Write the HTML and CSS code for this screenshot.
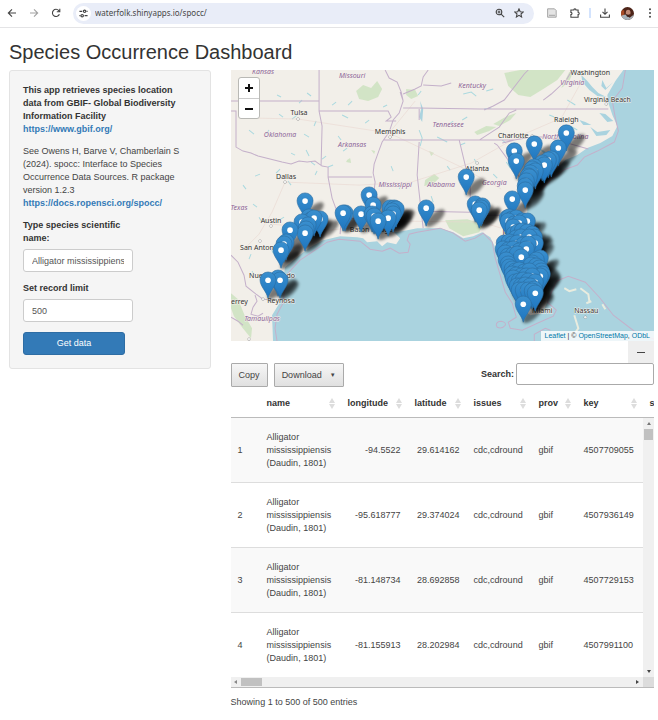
FILE: index.html
```html
<!DOCTYPE html>
<html lang="en">
<head>
<meta charset="utf-8">
<title>Species Occurrence Dashboard</title>
<link rel="stylesheet" href="styles.css">
</head>
<body>
<header class="browser">
  <button class="tool" aria-label="Back"><svg viewBox="0 0 10 10"><path d="M9 5H1.5M5 1.3L1.3 5L5 8.7"/></svg></button>
  <button class="tool tool-off" aria-label="Forward"><svg viewBox="0 0 10 10"><path d="M1 5H8.5M5 1.3L8.7 5L5 8.7"/></svg></button>
  <button class="tool" aria-label="Reload"><svg viewBox="0 0 10 10"><path d="M8.4 6.2A3.6 3.6 0 1 1 7.8 2.6L8.6 3.5M8.8 .8V3.8H5.8"/></svg></button>
  <div class="address">
    <button class="site" aria-label="Site information"><svg viewBox="0 0 10 10"><path d="M1.3 3H3.8M6 7H8.7M1.3 7H2.2M7.8 3H8.7"/><circle cx="6" cy="3" r="1.1"/><circle cx="3.8" cy="7" r="1.1"/></svg></button>
    <input class="url" aria-label="Address" value="waterfolk.shinyapps.io/spocc/">
    <button class="tool" aria-label="Zoom"><svg viewBox="0 0 10 10"><circle cx="4" cy="4" r="2.8"/><path d="M6.1 6.1L9.2 9.2M2.6 4H5.4M4 2.6V5.4"/></svg></button>
    <button class="tool" aria-label="Bookmark"><svg viewBox="0 0 10 10"><path d="M5 .9L6.2 3.7L9.3 4L7 6L7.6 9L5 7.4L2.4 9L3 6L.7 4L3.8 3.7Z"/></svg></button>
  </div>
  <button class="tool tool-wide" aria-label="Reader"><svg viewBox="0 0 10 10"><path class="page-icon" d="M.6 .8H7.5L9.2 2.5V9.2H.6Z"/><path class="page-icon" d="M2 7.3H8"/></svg></button>
  <button class="tool" aria-label="Extensions"><svg viewBox="0 0 10 10"><path d="M.9 2H3.8A1.1 1.1 0 0 1 6 2H8.1V4.3A1.1 1.1 0 0 1 8.1 6.5V9.2H.9V6.6A1.1 1.1 0 0 0 .9 4.4Z"/></svg></button>
  <span class="divider"></span>
  <button class="tool" aria-label="Downloads"><svg viewBox="0 0 10 10"><path d="M5 .4V6M2.5 3.8L5 6.3L7.5 3.8M.6 6.6V9.2H9.4V6.6"/></svg></button>
  <button class="avatar" aria-label="Profile"><svg viewBox="0 0 12 12"><defs><clipPath id="face"><circle cx="6" cy="6" r="6"/></clipPath></defs><g clip-path="url(#face)"><path fill="#4d2418" d="M0 0H12V12H0Z"/><path fill="#a94a24" d="M0 3H3V9H0Z"/><path fill="#a7b2ba" d="M0 8L4 7L8 10L12 7V12H0Z"/><ellipse cx="6.6" cy="5.3" rx="2.2" ry="2.8" fill="#c08a76"/><path fill="#3d2019" d="M4.5 6.3Q6.6 8 8.8 6.3L7.5 9H5.5Z"/></g></svg></button>
  <button class="tool" aria-label="Menu"><svg viewBox="0 0 10 10"><g class="dots"><circle cx="5" cy="1.2" r="1"/><circle cx="5" cy="5" r="1"/><circle cx="5" cy="8.8" r="1"/></g></svg></button>
</header>

<main class="page">
  <h1>Species Occurrence Dashboard</h1>
  <div class="columns">
    <form class="well">
      <p class="strong">This app retrieves species location data from GBIF- Global Biodiversity Information Facility<br><a href="https://www.gbif.org/">https://www.gbif.org/</a></p>
      <p>See Owens H, Barve V, Chamberlain S (2024). spocc: Interface to Species Occurrence Data Sources. R package version 1.2.3<br><a href="https://docs.ropensci.org/spocc/">https://docs.ropensci.org/spocc/</a></p>
      <div class="field">
        <label for="species">Type species scientific name:</label>
        <input id="species" type="text" value="Alligator mississippiensis">
      </div>
      <div class="field">
        <label for="limit">Set record limit</label>
        <input id="limit" type="text" value="500">
      </div>
      <button class="primary" type="button">Get data</button>
    </form>

    <section class="results">
      <div class="map">
        <svg class="map-canvas" viewBox="0 0 423 271" role="img" aria-label="Occurrence map">
          <defs>
            <linearGradient id="pinfill" x1="0" y1="0" x2="0" y2="1"><stop offset="0" stop-color="#3a8fce"/><stop offset="1" stop-color="#1d75bf"/></linearGradient>
            <filter id="soft" x="-50%" y="-100%" width="200%" height="300%"><feGaussianBlur stdDeviation="1.8"/></filter>
            <g id="pin"><path d="M0 18C-1.500 11-8 6.500-8-.5A8 7.700 0 0 1 8-.5C8 6.500 1.500 11 0 18Z" fill="url(#pinfill)" stroke="#2a6c9f" stroke-width=".6"/><circle r="2.800" fill="#fff"/></g>
            <ellipse id="shadow" cx="9" cy="10" rx="12" ry="5" transform="rotate(-42 9 10)" filter="url(#soft)"/>
          </defs>
          <path class="water" d="M0 0H423V271H0Z"/>
          <path class="land" d="M0 0H392L384 11L376 25L377 33L381 45L386 56L381 66L369 73L356 78L346 85L334 90L324 101L309 113L296 131L296 142L299 155L306 168L312 188L317 212L316 232L311 243L299 245L291 238L284 232L279 215L272 202L269 188L264 177L259 167L251 162L242 166L232 168L222 162L209 158L186 158L171 161L163 162L169 168L165 174L156 172L151 176L146 171L136 172L132 168L126 167L109 166L92 170L79 177L66 187L54 197L51 215L49 232L41 245L42 271H0Z"/>
          <g class="wood">
            <path d="M125 21L132 15L140 18L146 11L151 19L147 27L137 31L128 29ZM273 3L289 0H334L326 10L312 19L299 27L287 25L277 16ZM243 62L255 56L265 57L258 61L246 65ZM194 110L203 104L208 108L202 114L193 116ZM116 90L119 88L120 93L115 92ZM198 81L203 83L200 86ZM140 80L144 81L143 84ZM214 150L236 149L252 154L248 162L232 166L218 158ZM0 223L7 229L14 246L21 258L20 268L11 257L3 246L0 238ZM330 18L333 12L338 2H342L337 13ZM175 19L184 20L187 26L180 29L175 25ZM262 54L276 46L285 43L279 50L268 56Z"/>
          </g>
          <g class="lake">
            <path d="M189 31L192 39L191 52L188 47L190 39ZM350 5L356 11L361 17L367 23L375 27L366 26L358 20L351 12ZM359 57L366 62L379 60L375 65L365 66ZM368 43L374 44L382 51L376 52ZM348 50L354 52L360 55L352 55ZM371 10L375 18L382 12L374 20L370 16ZM306 77L313 81L318 87L311 82Z"/>
            <path class="brook" d="M18 60l5 4M38 60l-3 4M48 44l4 3M61 49l5-4M73 64l5 3M85 51l-2 5M75 80l3 6M80 92l4 3M60 83l4 2M49 99l-4 4M24 106l5-2M12 115l3 4M22 134l4 3M57 111l3 4M86 101l-2 4M46 25l4 2M68 33l3-3M76 23l4 3M101 35l4-3M111 45l6 3M121 31l-4 4M156 35l-4 2M134 53l4-3M107 66l3 4M116 78l-4 3M91 89l4-3M97 97l5-2M188 60l3 8l-2 8M206 67l10 5M187 25l3-4M232 24l8-2l5 4M255 21l7-2M218 54l4-3M229 75l5-2M271 70l4 3M275 92l4 6M216 96l3 4M243 89l3 5M262 104l4 4M231 50l5-3M253 39l7-1M336 30l8 5M346 60l-7-4M337 68l-6 3M318 45l5 2M160 96l2 5M171 114l-3 5M200 126l2 6M28 147l3 5M40 178l2 5M48 150l5-3M21 201l3 4M20 184l-2 5"/>
          </g>
          <g class="road"><path d="M14 178L28 164L41 142L54 112M22 48L67 49M67 49L158 63L184 31M158 63L228 96M54 112L128 115L180 112L240 93L286 67L330 48L350 12M228 96L270 119M41 154L100 160L170 151L250 152L270 158"/></g>
          <path class="border" d="M0 31H88V0M88 31V41H157L160 47L155 51H165M0 41H5V77L12 81L20 83L27 86L35 88L43 90L51 92L60 94L68 91L76 92L84 91L91 96L97 97V107L101 128L105 139L110 148L109 164M88 41L91 56L90 95M97 107H141M154 0L158 8L166 12L170 22L172 31L168 43L162 50L158 62L151 72L148 80L143 94L142 103L144 112L143 120L147 129M172 31L169 22M172 38H187L248 39H377M188 39V50M153 70H283L301 67H315L357 79M188 72L186 105L190 141L192 158M228 70L239 116L239 142L256 145H280L297 145M263 73L266 75L277 90L287 105L296 125M283 70L271 73M190 141L239 142M248 70L268 57L278 43L285 40M297 0L293 4L273 30L262 36L253 40M312 30L320 24L335 10L341 0M172 24L184 19L190 16L192 7L197 0M192 15L210 16L220 13M109 148H137"/>
          <g class="border">
            <path d="M0 185L7 192L13 205L15 216L25 224L32 229L44 230M24 225L26 231L22 237L20 244L27 246L32 243M0 247L7 251L12 255"/>
            <path d="M46 271L44 258L46 244L52 233L54 217L57 203L69 190L84 180L96 172L108 169L129 171L139 179L151 181L159 178L168 183L177 182L179 174L176 170L178 164L186 162L209 158L222 163L234 171L244 168L252 163L261 172L264 188L269 205L274 222L281 233L285 247L277 252L279 258L291 260L306 253L322 246L325 240L316 232L321 220L325 211L337 206L354 212L368 227L382 245L403 261L423 269"/>
            <path d="M394 0L391 18L381 31L384 48L387 61L383 72L366 81L353 87L346 95L332 100L320 109L306 124"/>
            <path d="M265 255Q265 251 270 251Q275 252 274 255Q271 259 266 257ZM303 271V264L314 258L319 260"/>
          </g>
          <path class="land isle" d="M333 218L338 221L345 219M349 218L357 224L358 231M343 245L347 258L342 265M360 231L355 233M371 234L374 239"/>
          <g class="state">
            <text x="32" y="4">Kansas</text><text x="121" y="8">Missouri</text><text x="49" y="67">Oklahoma</text><text x="121" y="77">Arkansas</text><text x="164" y="117">Mississippi</text><text x="210" y="117">Alabama</text><text x="217" y="57">Tennessee</text><text x="241" y="18">Kentucky</text><text x="341" y="15">Virginia</text><text x="334" y="69">North Carolina</text><text x="263" y="115">Georgia</text><text x="8" y="140">Texas</text><text x="31" y="251">Tamaulipas</text>
          </g>
          <g class="city">
            <text x="68" y="45">Tulsa</text><text x="159" y="64">Memphis</text><text x="55" y="109">Dallas</text><text x="40" y="153">Austin</text><text x="29" y="180">San Antonio</text><text x="41" y="208">Nuevo Laredo</text><text x="50" y="233">Reynosa</text><text x="5" y="234">nterrey</text><text x="140" y="162">Baton Rouge</text><text x="246" y="101">Atlanta</text><text x="282" y="68">Charlotte</text><text x="335" y="52">Raleigh</text><text x="376" y="32">Virginia Beach</text><text x="359" y="5">Washington</text><text x="311" y="243">Miami</text><text x="355" y="243">Nassau</text><text x="290" y="164">Jacksonville</text>
            <circle cx="67" cy="49" r="1.300"/><circle cx="54" cy="112" r="1.300"/><circle cx="40" cy="156" r="1.300"/><circle cx="29" cy="171" r="1.300"/><circle cx="32" cy="229" r="1.300"/><circle cx="246" cy="93" r="1.300"/><circle cx="301" cy="66" r="1.300"/><circle cx="375" cy="34" r="1.300"/><circle cx="354" cy="247" r="1.300"/><circle cx="159" cy="67" r="1.300"/><circle cx="18" cy="269" r="1.300"/>
          </g>
          <g id="shadows"></g>
          <g id="pins"></g>
        </svg>
        <div class="zoom"><button aria-label="Zoom in"><svg viewBox="0 0 10 10"><path d="M5 1V9M1 5H9"/></svg></button><button aria-label="Zoom out"><svg viewBox="0 0 10 10"><path d="M1 5H9"/></svg></button></div>
        <div class="credit"><a href="https://leafletjs.com">Leaflet</a> | © <a href="https://openstreetmap.org">OpenStreetMap</a>, <a href="https://opendatacommons.org">ODbL</a></div>
      </div>
      <div class="collapse-row"><button class="collapse" aria-label="Collapse"><span></span></button></div>
      <div class="toolbar">
        <button class="grey">Copy</button>
        <button class="grey">Download<span class="caret">▼</span></button>
        <label for="search">Search:</label>
        <input id="search" type="search">
      </div>
      <div class="scroller">
        <table class="data" id="records">
          <colgroup><col class="c-num"><col class="c-name"><col class="c-lon"><col class="c-lat"><col class="c-issues"><col class="c-prov"><col class="c-key"><col class="c-more"></colgroup>
          <thead><tr><th></th><th>name<i class="sort"></i></th><th>longitude<i class="sort"></i></th><th>latitude<i class="sort"></i></th><th>issues<i class="sort"></i></th><th>prov<i class="sort"></i></th><th>key<i class="sort"></i></th><th>species</th></tr></thead>
          <tbody>
            <tr><td>1</td><td>Alligator mississippiensis (Daudin, 1801)</td><td class="n">-94.5522</td><td class="n">29.614162</td><td>cdc,cdround</td><td>gbif</td><td>4507709055</td><td></td></tr>
            <tr><td>2</td><td>Alligator mississippiensis (Daudin, 1801)</td><td class="n">-95.618777</td><td class="n">29.374024</td><td>cdc,cdround</td><td>gbif</td><td>4507936149</td><td></td></tr>
            <tr><td>3</td><td>Alligator mississippiensis (Daudin, 1801)</td><td class="n">-81.148734</td><td class="n">28.692858</td><td>cdc,cdround</td><td>gbif</td><td>4507729153</td><td></td></tr>
            <tr><td>4</td><td>Alligator mississippiensis (Daudin, 1801)</td><td class="n">-81.155913</td><td class="n">28.202984</td><td>cdc,cdround</td><td>gbif</td><td>4507991100</td><td></td></tr>
          </tbody>
        </table>
        <div class="vbar"><span class="up"></span><span class="vthumb"></span><span class="down"></span></div>
        <div class="hbar"><span class="left"></span><span class="hthumb"></span><span class="right"></span><span class="corner"></span></div>
      </div>
      <p class="info">Showing 1 to 500 of 500 entries</p>
    </section>
  </div>
</main>
<script src="map.js"></script>
</body>
</html>
```
FILE: map.js
```js
// Occurrence positions on the map canvas, north to south within each region.
const places = [
  [335, 63], [327, 78], [303, 74], [283, 81], [285, 91],
  [320, 89], [317, 90], [311, 93], [313, 95],
  [303, 97], [301, 99], [304, 101], [299, 103], [297, 106], [298, 107],
  [295, 111], [294, 116], [294, 120], [281, 129], [235, 107],
  [244, 134], [251, 136], [250, 138], [248, 140],
  [74, 131], [89, 149], [78, 147], [80, 150], [83, 148], [71, 152], [77, 155], [75, 159], [74, 163],
  [59, 160], [55, 172], [53, 174], [50, 180],
  [47, 208], [49, 210], [37, 210],
  [114, 143], [112, 143], [130, 144], [138, 125], [142, 135],
  [159, 138], [163, 138], [165, 139], [161, 141], [162, 144], [157, 148], [141, 144], [143, 146], [147, 151],
  [195, 138],
  [276, 148], [278, 147], [281, 149], [285, 148], [291, 151], [296, 151], [277, 151], [283, 154], [288, 153], [282, 157],
  [283, 164], [287, 162], [291, 161], [296, 162], [301, 164], [303, 167], [285, 168], [290, 167], [298, 167], [304, 173],
  [273, 173], [278, 172], [281, 174], [286, 173], [292, 175], [297, 174], [272, 179], [277, 180], [282, 179], [288, 181], [295, 179],
  [274, 183], [277, 186], [282, 185], [286, 184], [309, 188], [305, 190], [301, 193], [290, 187],
  [275, 190], [277, 194], [278, 197], [300, 195], [305, 196], [308, 198], [310, 201], [311, 204], [309, 206],
  [281, 199], [284, 201], [288, 200], [293, 202], [298, 201], [281, 204], [285, 205], [290, 206], [295, 206], [301, 206],
  [282, 208], [284, 212], [288, 211], [292, 210], [297, 211], [304, 212], [286, 216], [290, 216], [294, 215], [299, 216],
  [288, 220], [292, 220], [297, 220], [303, 219], [301, 221], [304, 223], [292, 234]
];

const svgNS = "http://www.w3.org/2000/svg";

function place(layer, symbol, [x, y]) {
  const use = document.createElementNS(svgNS, "use");
  use.setAttribute("href", symbol);
  use.setAttribute("x", x);
  use.setAttribute("y", y);
  document.getElementById(layer).append(use);
}

places.forEach(p => {
  place("shadows", "#shadow", p);
  place("pins", "#pin", p);
});
```
FILE: styles.css
```css
* { box-sizing: border-box; }
body { margin: 0; background: #fff; color: #444; font: 9px/13px "Liberation Sans", Arial, sans-serif; }
button, input { font: inherit; color: inherit; margin: 0; }
button { padding: 0; border: 0; background: none; }
p { margin: 0 0 9px; }
a { color: #337ab7; text-decoration: none; }
h1 { margin: 12px 0 6px; font-size: 20px; line-height: 24px; font-weight: 400; color: #333; }

.browser { display: flex; align-items: center; height: 28px; padding: 0 3px 1px 7px; gap: 12px; border-bottom: 1px solid #e4e4e6; }
.browser svg { display: block; width: 100%; height: 100%; fill: none; stroke: #444; stroke-width: 1.1; }
.tool { width: 10px; height: 10px; flex: none; }
.tool-wide { width: 12px; }
.tool-off { opacity: .5; }
.browser .dots { fill: #444; stroke: none; }
.browser .page-icon { fill: #e4e4e4; stroke: #888; stroke-width: .7; }
.address { flex: 1; display: flex; align-items: center; gap: 9px; height: 21px; padding: 0 10px 0 3px; border-radius: 11px; background: #e9edf8; }
.site { width: 15px; height: 15px; padding: 2px; border-radius: 50%; background: #fff; flex: none; }
.url { flex: 1; min-width: 0; margin-left: -5px; padding: 0; border: 0; background: none; color: #474747; font: 8px/12px "Noto Sans", sans-serif; }
.divider { width: 2px; height: 10px; margin: 0 -3px; background: #d3e3fd; }
.avatar { width: 13px; height: 13px; flex: none; margin: 0 -1px; }
.avatar svg { stroke: none; }

.page { padding: 0 4px 0 9px; }
.columns { display: grid; grid-template-columns: 1fr minmax(0, 2.1fr); gap: 20px; align-items: start; }
.well { padding: 13px; border: 1px solid #e3e3e3; border-radius: 3px; background: #f5f5f5; }
.well p { padding-right: 6px; }
.strong, .well a, label { font-weight: 700; }
.strong, label { color: #333; }
.field { width: 110px; margin-bottom: 10px; }
.field label { display: block; margin-bottom: 4px; }
.field input { display: block; width: 100%; height: 23px; padding: 0 8px; border: 1px solid #ccc; border-radius: 3px; background: #fff; color: #555; }
.primary { display: block; width: 102px; height: 23px; border: 1px solid #2e6da4; border-radius: 3px; background: #337ab7; color: #fff; }

.map { position: relative; }
.map-canvas { display: block; width: 100%; }
.water { fill: #aad3df; }
.land { fill: #f2efe9; }
.isle { fill: none; stroke: #e9ecdf; stroke-width: 2; }
.wood { fill: #c5dfb7; opacity: .7; }
.lake { fill: #aad3df; }
.brook { fill: none; stroke: #aad9df; stroke-width: 1; }
.road { fill: none; stroke: #ead6d0; stroke-width: .6; }
.border { fill: none; stroke: #c4b0ca; stroke-width: 1; }
.city, .state { font-family: "Noto Sans", sans-serif; text-anchor: middle; paint-order: stroke; stroke: #f5f2ec; stroke-width: 1px; }
.city { font-size: 7px; fill: #333; }
.state { font-size: 7px; font-style: italic; fill: #8c6497; }
.city circle { fill: #eee; stroke: #777; stroke-width: .6px; }
#shadow { fill: #000; fill-opacity: .5; }
.zoom { position: absolute; top: 7px; left: 7px; width: 22px; border: 1px solid #b9b9b5; border-radius: 3px; background: #fff; }
.zoom button { display: block; width: 100%; height: 20px; }
.zoom button + button { border-top: 1px solid #ccc; }
.zoom svg { display: block; width: 10px; height: 10px; margin: auto; stroke: #111; stroke-width: 2; }
.credit { position: absolute; right: 0; bottom: 0; padding: 0 4px; background: rgba(255, 255, 255, .8); color: #333; font-size: 7px; line-height: 10px; }
.credit a { color: #0078a8; }

.collapse-row { display: flex; justify-content: flex-end; }
.collapse { width: 26px; height: 22px; background: #eee; }
.collapse span { display: block; width: 8px; height: 1px; margin: auto; background: #444; }
.toolbar { display: flex; align-items: flex-start; height: 27px; }
.grey { height: 24px; padding: 0 7px; margin-right: 6px; border: 1px solid #aaa; border-radius: 1px; background: linear-gradient(#f6f6f6, #e0e0e0); }
.caret { margin-left: 8px; font-size: 6px; vertical-align: 1px; }
.toolbar label { margin-left: auto; padding-top: 5px; }
.toolbar input { width: 138px; height: 22px; margin-left: 2px; padding: 0 4px; border: 1px solid #aaa; border-radius: 2px; background: #fff; }

.scroller { position: relative; overflow: hidden; border-bottom: 1px solid #bbb; }
.data { width: 492px; table-layout: fixed; border-collapse: separate; border-spacing: 0; }
.c-num { width: 29px; }
.c-name { width: 81px; }
.c-lon { width: 67px; }
.c-lat { width: 59px; }
.c-issues { width: 65px; }
.c-prov { width: 45px; }
.c-key { width: 66px; }
.c-more { width: 80px; }
th { position: relative; height: 28px; padding: 0 7px; border-bottom: 1px solid #bbb; text-align: left; color: #333; }
td { height: 65px; padding: 0 7px; border-bottom: 1px solid #ddd; }
tbody tr:nth-child(odd) { background: #f9f9f9; }
.n { text-align: right; }
.sort { position: absolute; right: 6px; top: 8px; width: 6px; height: 11px; }
.sort::before, .sort::after { content: ""; position: absolute; left: 0; border: 3px solid transparent; }
.sort::before { top: -3px; border-bottom: 5px solid #ddd; }
.sort::after { top: 6px; border-top: 5px solid #ddd; }
.vbar { position: absolute; right: 0; top: 28px; bottom: 10px; width: 11px; display: flex; flex-direction: column; align-items: center; padding: 4px 0; background: #f0f0f0; }
.vthumb { width: 9px; height: 11px; margin-top: 4px; background: #c1c1c1; }
.up, .down, .left, .right { border: 2px solid transparent; }
.up { border-top: 0; border-bottom: 3px solid #777; }
.down { margin-top: auto; border-bottom: 0; border-top: 3px solid #444; }
.hbar { position: relative; display: flex; align-items: center; height: 10px; margin-top: -1px; padding-left: 3px; background: #f0f0f0; }
.left { border-left: 0; border-right: 3px solid #888; }
.right { margin-left: auto; margin-right: 4px; border-right: 0; border-left: 3px solid #444; }
.hthumb { width: 21px; height: 8px; margin-left: 4px; background: #c1c1c1; }
.corner { width: 11px; height: 10px; background: #dcdcdc; }
.info { margin: 8px 0 0; }
```
